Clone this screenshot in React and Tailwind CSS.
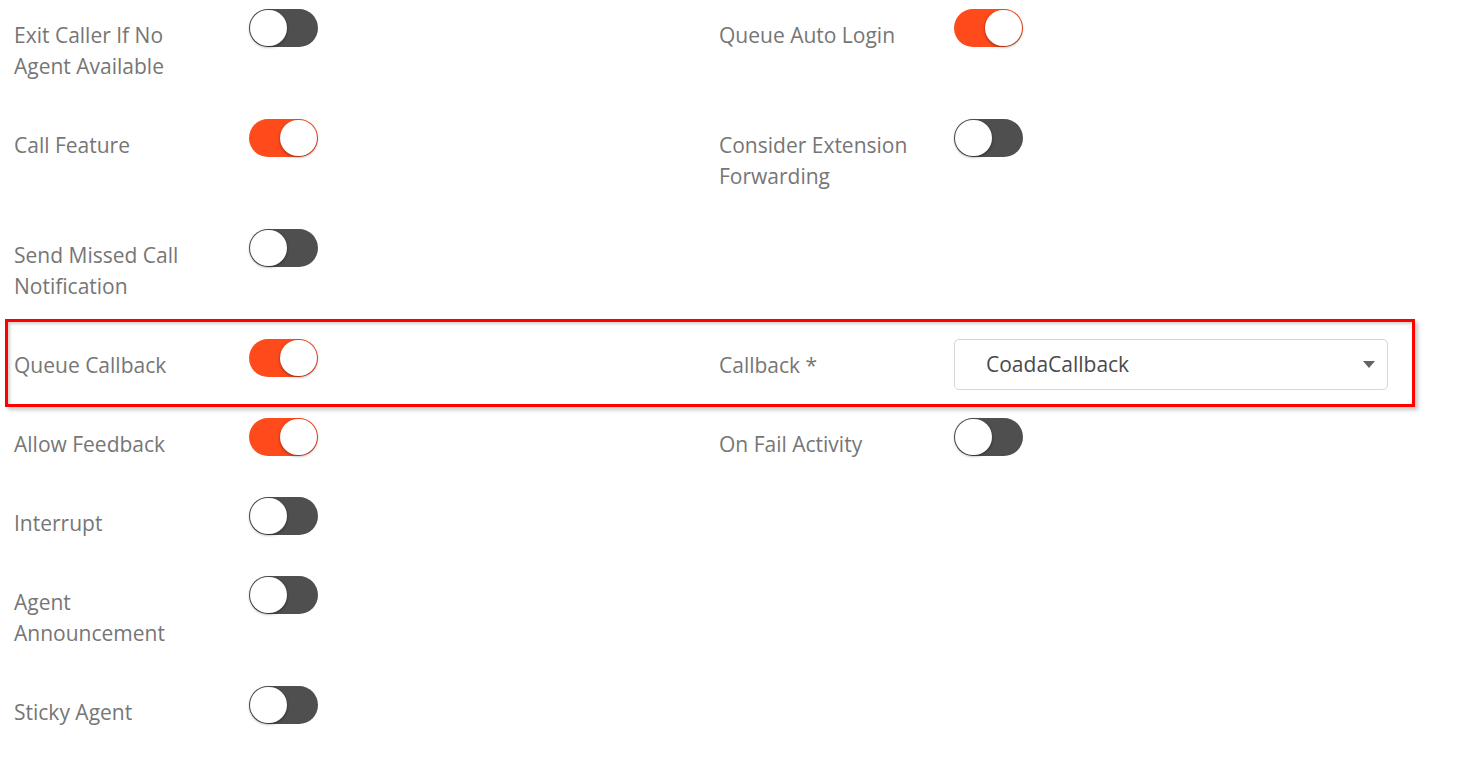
import React from "react";

function Toggle({ on }) {
  return (
    <div
      className={`relative h-[38px] w-[69px] shrink-0 rounded-full ${
        on ? "bg-[#ff4a1c]" : "bg-[#4f4f4f]"
      }`}
    >
      <div
        className={`absolute top-[1px] h-[36px] w-[37px] rounded-full bg-white shadow-[0_1px_3px_rgba(0,0,0,0.45)] ${
          on ? "right-[1px]" : "left-[1px]"
        }`}
      />
    </div>
  );
}

function Field({ label, on, children }) {
  return (
    <div className="flex items-start pl-[14px]">
      <div className="w-[235px] shrink-0 pr-[35px] pt-[11px] pb-[-1px] text-[21px] leading-[31px] text-[#767676]">
        {label}
      </div>
      {children ?? <Toggle on={on} />}
    </div>
  );
}

function Row({ left, right, highlight }) {
  return (
    <div className="relative grid grid-cols-[705px_697px] pt-[9px] pb-[28px]">
      {highlight && (
        <div className="pointer-events-none absolute left-[5px] top-[-11px] h-[88px] w-[1410px] border-[3px] border-[#ff0000] shadow-[inset_2px_2px_3px_rgba(0,0,0,0.18),3px_3px_4px_rgba(0,0,0,0.22)]" />
      )}
      <div>{left}</div>
      <div>{right}</div>
    </div>
  );
}

export default function App() {
  return (
    <div
      className="h-[761px] w-[1472px] overflow-hidden bg-white"
      style={{ fontFamily: '"Open Sans", "Liberation Sans", sans-serif' }}
    >
      <Row
        left={<Field label="Exit Caller If No Agent Available" on={false} />}
        right={<Field label="Queue Auto Login" on={true} />}
      />
      <Row
        left={<Field label="Call Feature" on={true} />}
        right={<Field label="Consider Extension Forwarding" on={false} />}
      />
      <Row left={<Field label="Send Missed Call Notification" on={false} />} />
      <Row
        highlight
        left={<Field label="Queue Callback" on={true} />}
        right={
          <Field label="Callback *">
            <div className="relative -mb-[9px] flex h-[51px] w-[434px] items-center rounded-[5px] border border-[#d6d6d6] bg-white pl-[31px] text-[21px] text-[#4a4a4a]">
              CoadaCallback
              <svg
                className="absolute right-[12px] top-[21px]"
                width="12"
                height="8"
                viewBox="0 0 12 8"
              >
                <path d="M0 0 L12 0 L6 7 Z" fill="#676262" />
              </svg>
            </div>
          </Field>
        }
      />
      <Row
        left={<Field label="Allow Feedback" on={true} />}
        right={<Field label="On Fail Activity" on={false} />}
      />
      <Row left={<Field label="Interrupt" on={false} />} />
      <Row left={<Field label="Agent Announcement" on={false} />} />
      <Row left={<Field label="Sticky Agent" on={false} />} />
    </div>
  );
}
